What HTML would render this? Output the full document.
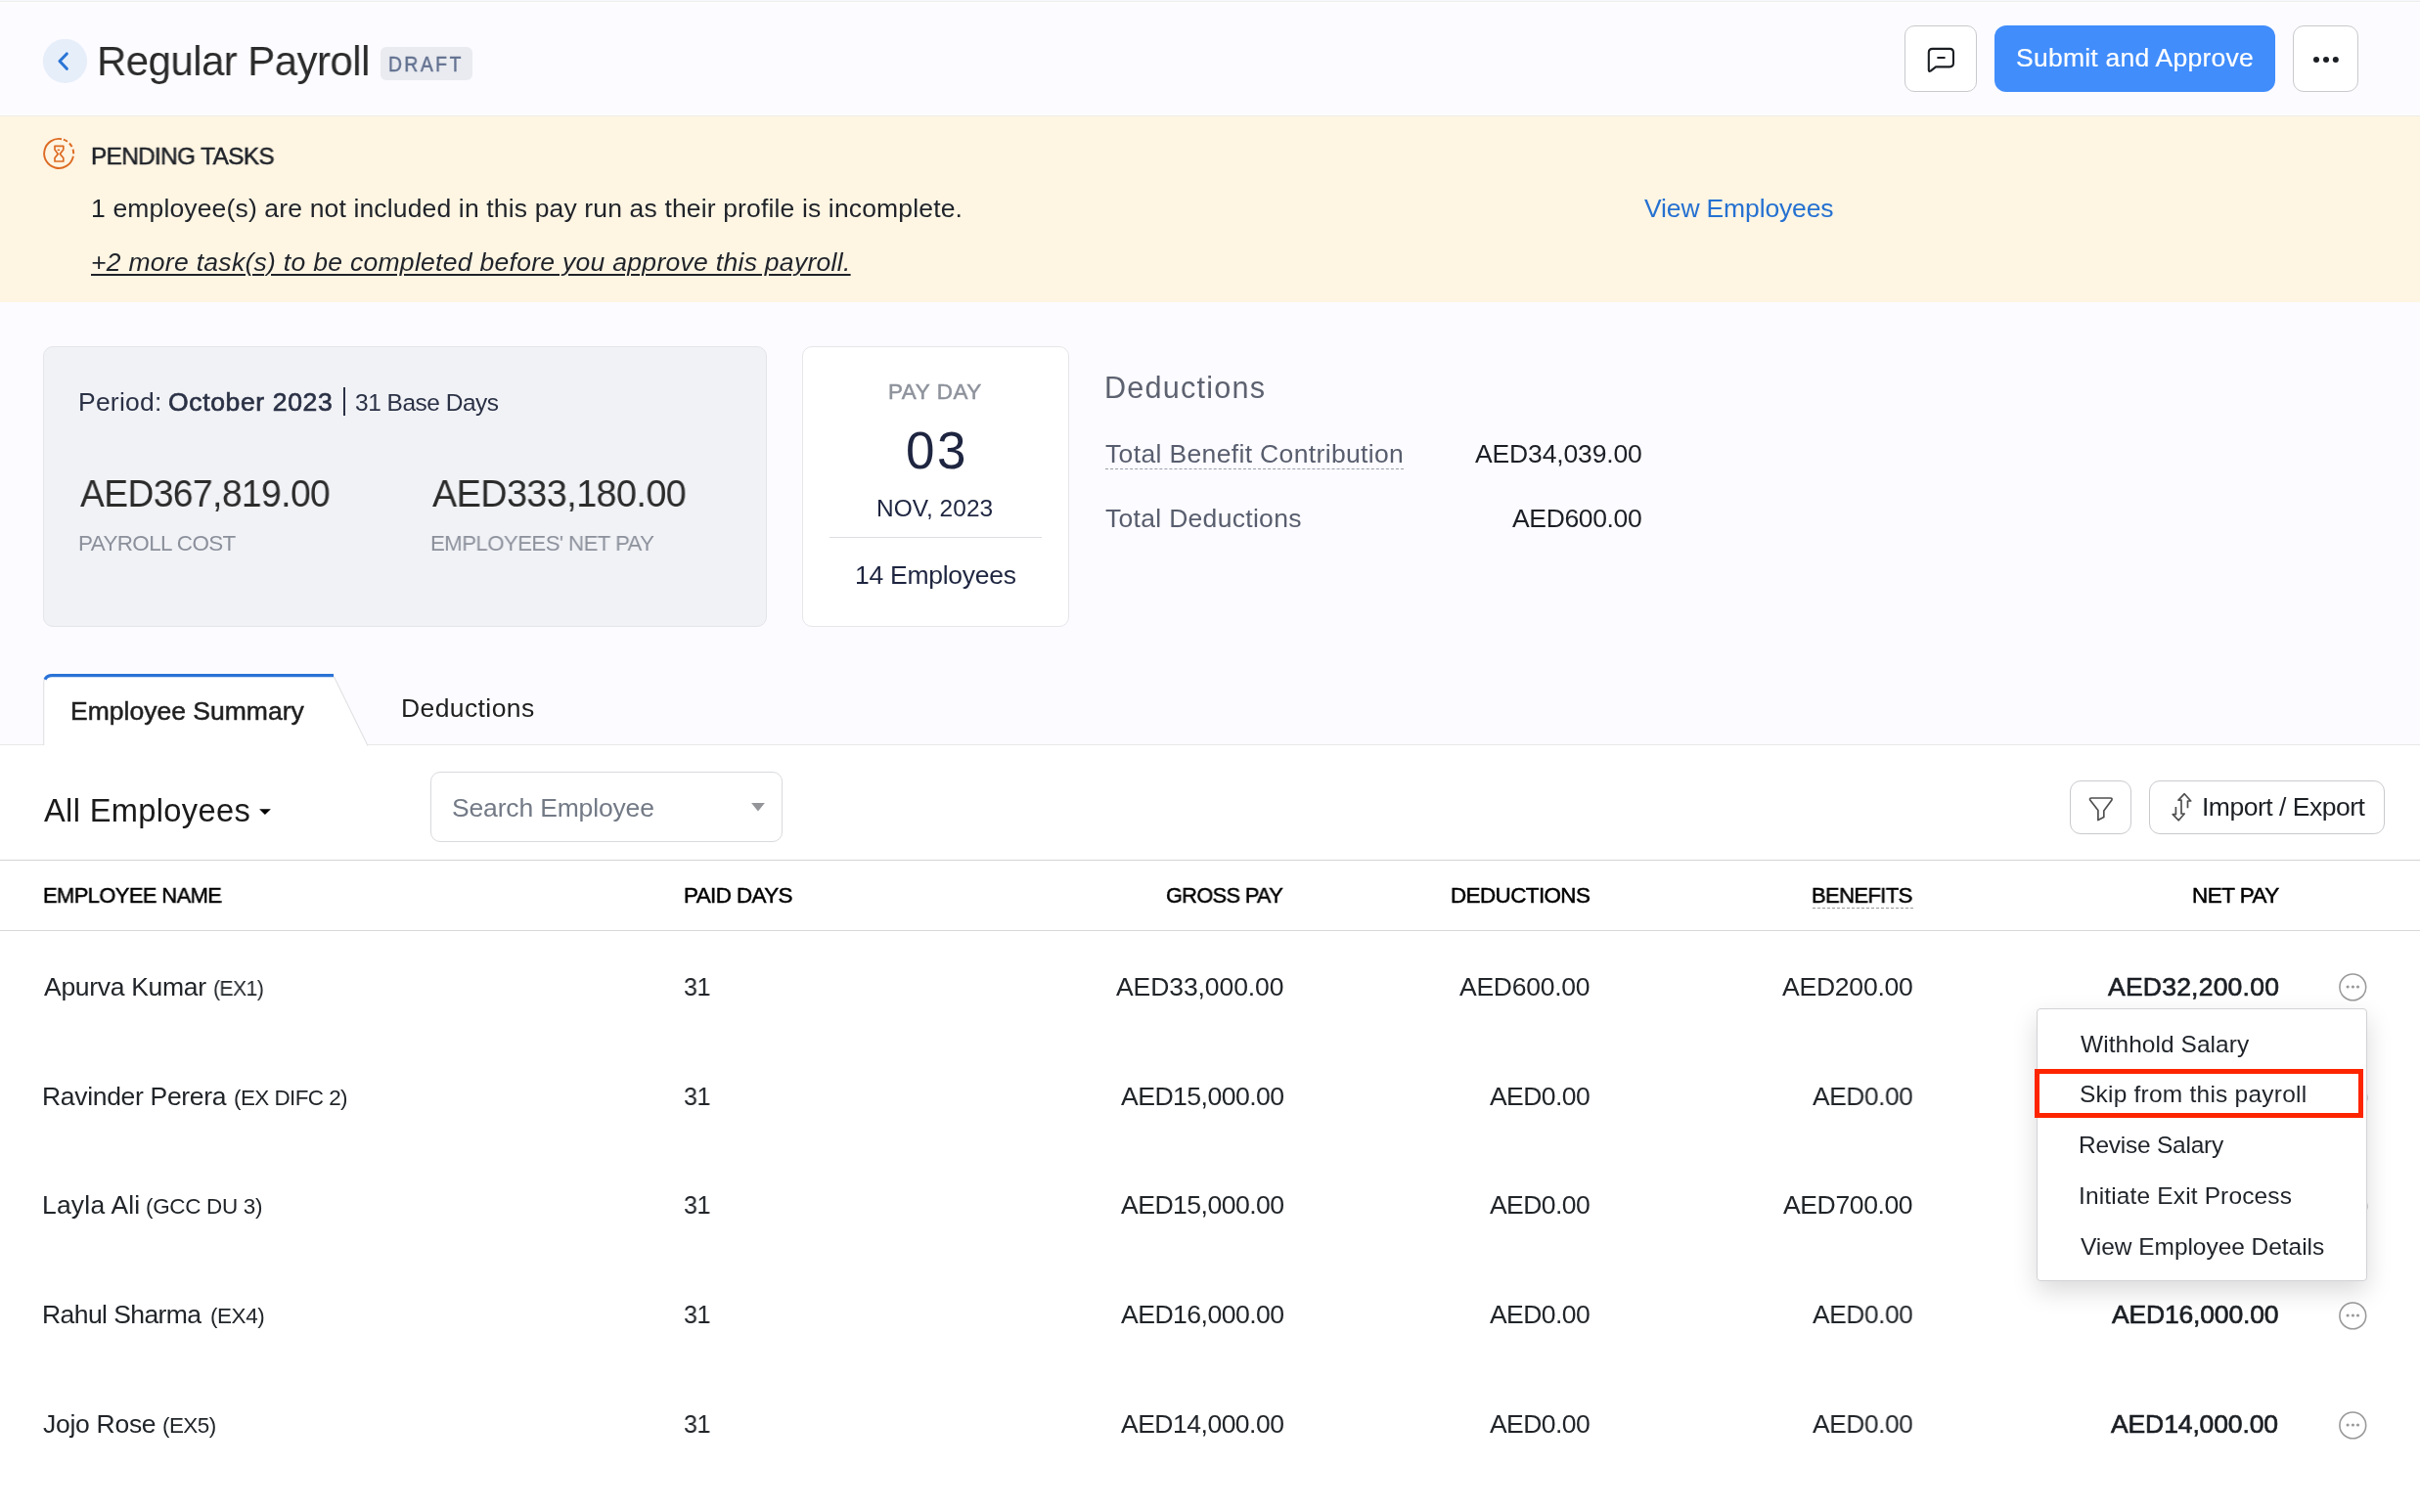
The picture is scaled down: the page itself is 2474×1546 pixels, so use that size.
<!DOCTYPE html>
<html><head><meta charset="utf-8"><title>Regular Payroll</title>
<style>
html,body{margin:0;padding:0;}
body{width:2474px;height:1546px;overflow:hidden;position:relative;background:#fcfbff;font-family:"Liberation Sans",sans-serif;}
.t{position:absolute;white-space:nowrap;will-change:transform;}
.a{position:absolute;box-sizing:border-box;}
</style></head><body>
<div class="a" style="left:0;top:0;width:2474px;height:1px;background:#f6f7fc"></div><div class="a" style="left:0;top:1px;width:2474px;height:1px;background:#eeeeed"></div><div class="a" style="left:0;top:2px;width:2474px;height:1px;background:#ffffff"></div>
<div class="a" style="left:0;top:117px;width:2474px;height:1px;background:#ffffff"></div><div class="a" style="left:0;top:118px;width:2474px;height:1px;background:#ececea"></div>
<div class="a" style="left:0;top:119px;width:2474px;height:190px;background:#fef5e3"></div>
<!-- back button -->
<svg class="a" style="left:44px;top:40px" width="45" height="45" viewBox="0 0 45 45"><circle cx="22.5" cy="22.4" r="22.6" fill="#e6eefa"/><path d="M24.3 15 L17 22.5 L24.3 30.3" fill="none" stroke="#2b74d6" stroke-width="3.1" stroke-linecap="round" stroke-linejoin="round"/></svg>
<div class="a" style="left:389px;top:48px;width:94px;height:34px;border-radius:6px;background:#e9ebf0"></div>
<!-- header buttons -->
<div class="a" style="left:1947px;top:26px;width:74px;height:68px;border-radius:10px;background:#fff;border:1px solid #c9cacd"></div>
<svg class="a" style="left:1947px;top:26px" width="74" height="68" viewBox="0 0 74 68"><path d="M24.8 27.6 Q24.8 23.85 28.6 23.85 H46.2 Q49.95 23.85 49.95 27.6 V38.6 Q49.95 42.35 46.2 42.35 H32 L26.6 46.6 Q24.8 47.6 24.8 45.6 Z" fill="none" stroke="#1b1e23" stroke-width="2.1" stroke-linejoin="round"/><path d="M34.2 33 H40.8" stroke="#1b1e23" stroke-width="2.1" stroke-linecap="round"/></svg>
<div class="a" style="left:2039px;top:26px;width:287px;height:68px;border-radius:12px;background:#418dfc"></div>
<div class="a" style="left:2344px;top:26px;width:67px;height:68px;border-radius:11px;background:#fff;border:1px solid #c9cacd"></div>
<svg class="a" style="left:2344px;top:26px" width="67" height="68" viewBox="0 0 67 68"><circle cx="24" cy="34.9" r="3" fill="#1b1e23"/><circle cx="34" cy="34.9" r="3" fill="#1b1e23"/><circle cx="43.8" cy="34.9" r="3" fill="#1b1e23"/></svg>
<!-- hourglass icon -->
<svg class="a" style="left:38px;top:135px" width="44" height="44" viewBox="0 0 44 44"><path d="M25 7.2 A15 15 0 1 0 36.6 26" fill="none" stroke="#dd6b22" stroke-width="1.9"/><path d="M25 7.2 A15 15 0 0 1 36.6 26" fill="none" stroke="#dd6b22" stroke-width="1.9" stroke-dasharray="4.5 2.6" stroke-dashoffset="-2"/><path d="M18 14.3 H26.8 V18 L23.3 22.4 L26.8 26.5 V30 H18 V26.5 L21.3 22.4 L18 18 Z" fill="none" stroke="#dd6b22" stroke-width="1.7" stroke-linejoin="round"/><ellipse cx="21.9" cy="18.3" rx="1.4" ry="0.9" fill="#dd6b22"/></svg>
<!-- cards -->
<div class="a" style="left:44px;top:354px;width:740px;height:287px;border-radius:10px;background:#f1f2f6;border:1px solid #e4e5ea"></div>
<div class="a" style="left:351px;top:396px;width:2px;height:29px;background:#2a3145"></div>
<div class="a" style="left:820px;top:354px;width:273px;height:287px;border-radius:10px;background:#fff;border:1px solid #e6e6ea"></div>
<div class="a" style="left:848px;top:549px;width:217px;height:1px;background:#dedee2"></div>
<div class="a" style="left:1130px;top:479px;width:305px;height:0;border-top:1px dashed #9aa0aa"></div>
<!-- tabs -->
<div class="a" style="left:0;top:762px;width:2474px;height:784px;background:#fff"></div>
<div class="a" style="left:0;top:761px;width:2474px;height:1px;background:#e8e8e9"></div>
<svg class="a" style="left:40px;top:686px" width="345" height="78" viewBox="0 0 345 78"><path d="M4.7 77 V12 Q4.7 5 12 5 H301 L336 77 Z" fill="#fff"/><path d="M4.7 76 V12 Q4.7 5 12 5 H301 L336 76.5" fill="none" stroke="#e0e0e3" stroke-width="1.1"/><path d="M6 8.8 Q8 4.6 13 4.6 H301" fill="none" stroke="#2a72d6" stroke-width="3.2"/></svg>
<!-- toolbar -->
<svg class="a" style="left:260px;top:820px" width="22" height="18" viewBox="0 0 22 18"><path d="M5.1 7.2 H16.9 L10.9 12.9 Z" fill="#000"/></svg>
<div class="a" style="left:440px;top:789px;width:360px;height:72px;border-radius:10px;background:#fff;border:1px solid #d9dadd"></div>
<svg class="a" style="left:760px;top:815px" width="30" height="20" viewBox="0 0 30 20"><path d="M8.1 6.1 H21.9 L15 14.6 Z" fill="#939598"/></svg>
<div class="a" style="left:2116px;top:798px;width:63px;height:55px;border-radius:11px;background:#fff;border:1px solid #c9cacd"></div>
<div class="a" style="left:2197px;top:798px;width:241px;height:55px;border-radius:11px;background:#fff;border:1px solid #c9cacd"></div>
<svg class="a" style="left:2116px;top:798px" width="130" height="55" viewBox="0 0 130 55"><path d="M22 18 Q20 18 20.7 20 L28.9 30.6 V40.6 L34.8 37.6 V30.9 L42.9 20 Q43.6 18 41.6 18 Z" fill="none" stroke="#4f4f4f" stroke-width="1.7" stroke-linejoin="round"/><path d="M120.5 28.2 V21 H123.7 L117.2 13.7 L111 20.2 H114 V34 H117.2 L111.3 40.8 L105.2 34.7 H108.4 V27.1" fill="none" stroke="#4f4f4f" stroke-width="1.7" stroke-linejoin="round"/></svg>
<!-- table -->
<div class="a" style="left:0;top:879px;width:2474px;height:1px;background:#d3d3d6"></div>
<div class="a" style="left:0;top:951px;width:2474px;height:1px;background:#d9d9dc"></div>
<div class="a" style="left:1853px;top:928px;width:103px;height:0;border-top:1px dashed #9a9a9a"></div>
<!-- row action circles -->
<svg class="a" style="left:2391px;top:995px" width="29" height="29" viewBox="0 0 29 29"><circle cx="14.3" cy="14.4" r="13.4" fill="#fff" stroke="#9a9a9a" stroke-width="1.6"/><circle cx="9.1" cy="14" r="1.6" fill="#9a9a9a"/><circle cx="14.4" cy="14" r="1.6" fill="#9a9a9a"/><circle cx="19.5" cy="14" r="1.6" fill="#9a9a9a"/></svg>
<svg class="a" style="left:2392px;top:1108px" width="29" height="29" viewBox="0 0 29 29"><circle cx="14.3" cy="14.4" r="13.4" fill="#fff" stroke="#9a9a9a" stroke-width="1.6"/></svg>
<svg class="a" style="left:2392px;top:1219px" width="29" height="29" viewBox="0 0 29 29"><circle cx="14.3" cy="14.4" r="13.4" fill="#fff" stroke="#9a9a9a" stroke-width="1.6"/></svg>
<svg class="a" style="left:2391px;top:1331px" width="29" height="29" viewBox="0 0 29 29"><circle cx="14.3" cy="14.4" r="13.4" fill="#fff" stroke="#9a9a9a" stroke-width="1.6"/><circle cx="9.1" cy="14" r="1.6" fill="#9a9a9a"/><circle cx="14.4" cy="14" r="1.6" fill="#9a9a9a"/><circle cx="19.5" cy="14" r="1.6" fill="#9a9a9a"/></svg>
<svg class="a" style="left:2391px;top:1443px" width="29" height="29" viewBox="0 0 29 29"><circle cx="14.3" cy="14.4" r="13.4" fill="#fff" stroke="#9a9a9a" stroke-width="1.6"/><circle cx="9.1" cy="14" r="1.6" fill="#9a9a9a"/><circle cx="14.4" cy="14" r="1.6" fill="#9a9a9a"/><circle cx="19.5" cy="14" r="1.6" fill="#9a9a9a"/></svg>
<!-- dropdown menu -->
<div class="a" style="left:2082px;top:1031px;width:338px;height:279px;border-radius:4px;background:#fff;border:1px solid #d2d2d6;box-shadow:0 10px 26px rgba(0,0,0,0.15)"></div>
<div class="a" style="left:2080px;top:1093px;width:336px;height:50px;border:5px solid #fd2400"></div>

<div class="t" style="left:99.1px;top:41.2px;font-size:42.84px;line-height:42.84px;font-weight:400;letter-spacing:-0.6px;color:#2b2b2b;transform:scaleX(0.9821);transform-origin:0 0;">Regular Payroll</div>
<div class="t" style="left:396.7px;top:54.5px;font-size:22.44px;line-height:22.44px;font-weight:400;letter-spacing:2.9px;-webkit-text-stroke:0.5px #627190;color:#627190;transform:scaleX(0.86);transform-origin:0 0;">DRAFT</div>
<div class="t" style="left:2061.0px;top:46.1px;font-size:26.52px;line-height:26.52px;font-weight:400;letter-spacing:0.235px;-webkit-text-stroke:0.2px #ffffff;color:#ffffff;">Submit and Approve</div>
<div class="t" style="left:93.0px;top:147.8px;font-size:24.48px;line-height:24.48px;font-weight:400;letter-spacing:-0.6px;-webkit-text-stroke:0.5px #1f2329;color:#1f2329;transform:scaleX(0.9925);transform-origin:0 0;">PENDING TASKS</div>
<div class="t" style="left:93.0px;top:200.1px;font-size:26.52px;line-height:26.52px;font-weight:400;letter-spacing:0.143px;color:#1f2329;">1 employee(s) are not included in this pay run as their profile is incomplete.</div>
<div class="t" style="left:93.0px;top:254.5px;font-size:26.52px;line-height:26.52px;font-weight:400;letter-spacing:0.286px;color:#1f2329;font-style:italic;text-decoration:underline;text-underline-offset:3px;text-decoration-thickness:2px;">+2 more task(s) to be completed before you approve this payroll.</div>
<div class="t" style="left:1681.0px;top:200.1px;font-size:26.52px;line-height:26.52px;font-weight:400;letter-spacing:-0.154px;color:#2571d1;">View Employees</div>
<div class="t" style="left:80.0px;top:397.9px;font-size:26.52px;line-height:26.52px;font-weight:400;letter-spacing:0.217px;color:#2a3145;">Period:</div>
<div class="t" style="left:172.0px;top:397.9px;font-size:26.52px;line-height:26.52px;font-weight:400;letter-spacing:0.636px;-webkit-text-stroke:0.65px #2a3145;color:#2a3145;">October 2023</div>
<div class="t" style="left:362.8px;top:399.6px;font-size:24.48px;line-height:24.48px;font-weight:400;letter-spacing:-0.482px;color:#2a3145;">31 Base Days</div>
<div class="t" style="left:82.0px;top:486.1px;font-size:38.76px;line-height:38.76px;font-weight:400;letter-spacing:-0.6px;color:#2b2b2b;transform:scaleX(0.96);transform-origin:0 0;">AED367,819.00</div>
<div class="t" style="left:80.0px;top:544.5px;font-size:22.44px;line-height:22.44px;font-weight:400;letter-spacing:-0.6px;color:#8b909b;">PAYROLL COST</div>
<div class="t" style="left:442.0px;top:486.1px;font-size:38.76px;line-height:38.76px;font-weight:400;letter-spacing:-0.6px;color:#2b2b2b;transform:scaleX(0.9751);transform-origin:0 0;">AED333,180.00</div>
<div class="t" style="left:440.0px;top:544.5px;font-size:22.44px;line-height:22.44px;font-weight:400;letter-spacing:-0.6px;color:#8b909b;transform:scaleX(0.9912);transform-origin:0 0;">EMPLOYEES' NET PAY</div>
<div class="t" style="left:908.4px;top:390.3px;font-size:22.44px;line-height:22.44px;font-weight:400;letter-spacing:0.567px;-webkit-text-stroke:0.5px #8d929b;color:#8d929b;">PAY DAY</div>
<div class="t" style="left:925.6px;top:433.8px;font-size:53.04px;line-height:53.04px;font-weight:400;letter-spacing:2.6px;color:#1e2540;">03</div>
<div class="t" style="left:896.4px;top:507.8px;font-size:24.48px;line-height:24.48px;font-weight:400;letter-spacing:0.05px;color:#1e2540;">NOV, 2023</div>
<div class="t" style="left:873.6px;top:575.1px;font-size:26.52px;line-height:26.52px;font-weight:400;letter-spacing:-0.282px;color:#1e2540;">14 Employees</div>
<div class="t" style="left:1129.0px;top:381.2px;font-size:30.6px;line-height:30.6px;font-weight:400;letter-spacing:1.222px;color:#5d6270;">Deductions</div>
<div class="t" style="left:1130.0px;top:450.9px;font-size:26.52px;line-height:26.52px;font-weight:400;letter-spacing:0.344px;color:#585e6e;">Total Benefit Contribution</div>
<div class="t" style="left:1507.5px;top:450.9px;font-size:26.52px;line-height:26.52px;font-weight:400;letter-spacing:-0.155px;color:#1c1f26;">AED34,039.00</div>
<div class="t" style="left:1130.0px;top:517.1px;font-size:26.52px;line-height:26.52px;font-weight:400;letter-spacing:0.293px;color:#585e6e;">Total Deductions</div>
<div class="t" style="left:1545.7px;top:517.1px;font-size:26.52px;line-height:26.52px;font-weight:400;letter-spacing:-0.363px;color:#1c1f26;">AED600.00</div>
<div class="t" style="left:72.0px;top:713.7px;font-size:26.52px;line-height:26.52px;font-weight:400;letter-spacing:0.0px;-webkit-text-stroke:0.5px #1f1f1f;color:#1f1f1f;">Employee Summary</div>
<div class="t" style="left:410.0px;top:711.1px;font-size:26.52px;line-height:26.52px;font-weight:400;letter-spacing:0.389px;color:#1f1f1f;">Deductions</div>
<div class="t" style="left:45.0px;top:813.4px;font-size:32.64px;line-height:32.64px;font-weight:400;letter-spacing:0.333px;color:#1a1a1a;">All Employees</div>
<div class="t" style="left:462.0px;top:812.5px;font-size:26.52px;line-height:26.52px;font-weight:400;letter-spacing:-0.171px;color:#737a86;">Search Employee</div>
<div class="t" style="left:2251.0px;top:811.8px;font-size:26.52px;line-height:26.52px;font-weight:400;letter-spacing:-0.5px;color:#1c1f24;">Import / Export</div>
<div class="t" style="left:44.0px;top:904.5px;font-size:22.44px;line-height:22.44px;font-weight:400;letter-spacing:-0.6px;-webkit-text-stroke:0.5px #000000;color:#000000;transform:scaleX(0.9763);transform-origin:0 0;">EMPLOYEE NAME</div>
<div class="t" style="left:699.0px;top:904.5px;font-size:22.44px;line-height:22.44px;font-weight:400;letter-spacing:-0.6px;-webkit-text-stroke:0.5px #000000;color:#000000;">PAID DAYS</div>
<div class="t" style="left:1192.4px;top:904.5px;font-size:22.44px;line-height:22.44px;font-weight:400;letter-spacing:-0.6px;-webkit-text-stroke:0.5px #000000;color:#000000;transform:scaleX(0.9659);transform-origin:0 0;">GROSS PAY</div>
<div class="t" style="left:1482.7px;top:904.5px;font-size:22.44px;line-height:22.44px;font-weight:400;letter-spacing:-0.6px;-webkit-text-stroke:0.5px #000000;color:#000000;">DEDUCTIONS</div>
<div class="t" style="left:1852.4px;top:904.5px;font-size:22.44px;line-height:22.44px;font-weight:400;letter-spacing:-0.6px;-webkit-text-stroke:0.5px #000000;color:#000000;transform:scaleX(0.9788);transform-origin:0 0;">BENEFITS</div>
<div class="t" style="left:2240.6px;top:904.5px;font-size:22.44px;line-height:22.44px;font-weight:400;letter-spacing:-0.517px;-webkit-text-stroke:0.5px #000000;color:#000000;">NET PAY</div>
<div class="t" style="left:45.0px;top:996.1px;font-size:26.52px;line-height:26.52px;font-weight:400;letter-spacing:-0.309px;color:#212529;">Apurva Kumar</div>
<div class="t" style="left:218.1px;top:999.5px;font-size:22.44px;line-height:22.44px;font-weight:400;letter-spacing:-0.6px;color:#212529;transform:scaleX(0.9434);transform-origin:0 0;">(EX1)</div>
<div class="t" style="left:699.1px;top:996.1px;font-size:26.52px;line-height:26.52px;font-weight:400;letter-spacing:-0.6px;color:#212529;transform:scaleX(0.9481);transform-origin:0 0;">31</div>
<div class="t" style="left:1141.0px;top:996.1px;font-size:26.52px;line-height:26.52px;font-weight:400;letter-spacing:-0.091px;color:#212529;">AED33,000.00</div>
<div class="t" style="left:1491.6px;top:996.1px;font-size:26.52px;line-height:26.52px;font-weight:400;letter-spacing:-0.262px;color:#212529;">AED600.00</div>
<div class="t" style="left:1821.8px;top:996.1px;font-size:26.52px;line-height:26.52px;font-weight:400;letter-spacing:-0.225px;color:#212529;">AED200.00</div>
<div class="t" style="left:2154.6px;top:996.1px;font-size:26.52px;line-height:26.52px;font-weight:400;letter-spacing:0.218px;-webkit-text-stroke:0.65px #1b1f24;color:#1b1f24;">AED32,200.00</div>
<div class="t" style="left:43.0px;top:1108.1px;font-size:26.52px;line-height:26.52px;font-weight:400;letter-spacing:-0.329px;color:#212529;">Ravinder Perera</div>
<div class="t" style="left:239.3px;top:1111.5px;font-size:22.44px;line-height:22.44px;font-weight:400;letter-spacing:-0.56px;color:#212529;">(EX DIFC 2)</div>
<div class="t" style="left:699.1px;top:1108.1px;font-size:26.52px;line-height:26.52px;font-weight:400;letter-spacing:-0.6px;color:#212529;transform:scaleX(0.9481);transform-origin:0 0;">31</div>
<div class="t" style="left:1146.2px;top:1108.1px;font-size:26.52px;line-height:26.52px;font-weight:400;letter-spacing:-0.564px;color:#212529;transform:scaleX(1.0048);transform-origin:0 0;">AED15,000.00</div>
<div class="t" style="left:1523.0px;top:1108.1px;font-size:26.52px;line-height:26.52px;font-weight:400;letter-spacing:-0.583px;color:#212529;">AED0.00</div>
<div class="t" style="left:1852.7px;top:1108.1px;font-size:26.52px;line-height:26.52px;font-weight:400;letter-spacing:-0.45px;color:#212529;transform:scaleX(0.9932);transform-origin:0 0;">AED0.00</div>
<div class="t" style="left:43.0px;top:1219.4px;font-size:26.52px;line-height:26.52px;font-weight:400;letter-spacing:0.188px;color:#212529;">Layla Ali</div>
<div class="t" style="left:148.8px;top:1222.8px;font-size:22.44px;line-height:22.44px;font-weight:400;letter-spacing:-0.3px;color:#212529;">(GCC DU 3)</div>
<div class="t" style="left:699.1px;top:1219.4px;font-size:26.52px;line-height:26.52px;font-weight:400;letter-spacing:-0.6px;color:#212529;transform:scaleX(0.9481);transform-origin:0 0;">31</div>
<div class="t" style="left:1146.2px;top:1219.4px;font-size:26.52px;line-height:26.52px;font-weight:400;letter-spacing:-0.564px;color:#212529;transform:scaleX(1.0048);transform-origin:0 0;">AED15,000.00</div>
<div class="t" style="left:1523.0px;top:1219.4px;font-size:26.52px;line-height:26.52px;font-weight:400;letter-spacing:-0.583px;color:#212529;">AED0.00</div>
<div class="t" style="left:1823.0px;top:1219.4px;font-size:26.52px;line-height:26.52px;font-weight:400;letter-spacing:-0.375px;color:#212529;">AED700.00</div>
<div class="t" style="left:43.0px;top:1331.1px;font-size:26.52px;line-height:26.52px;font-weight:400;letter-spacing:-0.582px;color:#212529;">Rahul Sharma</div>
<div class="t" style="left:214.5px;top:1334.5px;font-size:22.44px;line-height:22.44px;font-weight:400;letter-spacing:-0.425px;color:#212529;">(EX4)</div>
<div class="t" style="left:699.1px;top:1331.1px;font-size:26.52px;line-height:26.52px;font-weight:400;letter-spacing:-0.6px;color:#212529;transform:scaleX(0.9481);transform-origin:0 0;">31</div>
<div class="t" style="left:1146.2px;top:1331.1px;font-size:26.52px;line-height:26.52px;font-weight:400;letter-spacing:-0.564px;color:#212529;transform:scaleX(1.0048);transform-origin:0 0;">AED16,000.00</div>
<div class="t" style="left:1523.0px;top:1331.1px;font-size:26.52px;line-height:26.52px;font-weight:400;letter-spacing:-0.583px;color:#212529;">AED0.00</div>
<div class="t" style="left:1852.7px;top:1331.1px;font-size:26.52px;line-height:26.52px;font-weight:400;letter-spacing:-0.45px;color:#212529;transform:scaleX(0.9932);transform-origin:0 0;">AED0.00</div>
<div class="t" style="left:2159.0px;top:1331.1px;font-size:26.52px;line-height:26.52px;font-weight:400;letter-spacing:-0.182px;-webkit-text-stroke:0.65px #1b1f24;color:#1b1f24;">AED16,000.00</div>
<div class="t" style="left:44.0px;top:1443.1px;font-size:26.52px;line-height:26.52px;font-weight:400;letter-spacing:-0.288px;color:#212529;">Jojo Rose</div>
<div class="t" style="left:166.0px;top:1446.5px;font-size:22.44px;line-height:22.44px;font-weight:400;letter-spacing:-0.55px;color:#212529;">(EX5)</div>
<div class="t" style="left:699.1px;top:1443.1px;font-size:26.52px;line-height:26.52px;font-weight:400;letter-spacing:-0.6px;color:#212529;transform:scaleX(0.9481);transform-origin:0 0;">31</div>
<div class="t" style="left:1145.5px;top:1443.1px;font-size:26.52px;line-height:26.52px;font-weight:400;letter-spacing:-0.5px;color:#212529;">AED14,000.00</div>
<div class="t" style="left:1523.0px;top:1443.1px;font-size:26.52px;line-height:26.52px;font-weight:400;letter-spacing:-0.583px;color:#212529;">AED0.00</div>
<div class="t" style="left:1852.7px;top:1443.1px;font-size:26.52px;line-height:26.52px;font-weight:400;letter-spacing:-0.45px;color:#212529;transform:scaleX(0.9932);transform-origin:0 0;">AED0.00</div>
<div class="t" style="left:2158.4px;top:1443.1px;font-size:26.52px;line-height:26.52px;font-weight:400;letter-spacing:-0.127px;-webkit-text-stroke:0.65px #1b1f24;color:#1b1f24;">AED14,000.00</div>
<div class="t" style="left:2126.6px;top:1055.8px;font-size:24.48px;line-height:24.48px;font-weight:400;letter-spacing:0.057px;color:#1f2329;">Withhold Salary</div>
<div class="t" style="left:2125.6px;top:1106.8px;font-size:24.48px;line-height:24.48px;font-weight:400;letter-spacing:0.238px;color:#1f2329;">Skip from this payroll</div>
<div class="t" style="left:2124.6px;top:1158.8px;font-size:24.48px;line-height:24.48px;font-weight:400;letter-spacing:-0.233px;color:#1f2329;">Revise Salary</div>
<div class="t" style="left:2124.6px;top:1210.8px;font-size:24.48px;line-height:24.48px;font-weight:400;letter-spacing:0.155px;color:#1f2329;">Initiate Exit Process</div>
<div class="t" style="left:2126.6px;top:1262.8px;font-size:24.48px;line-height:24.48px;font-weight:400;letter-spacing:-0.03px;color:#1f2329;">View Employee Details</div>
</body></html>
